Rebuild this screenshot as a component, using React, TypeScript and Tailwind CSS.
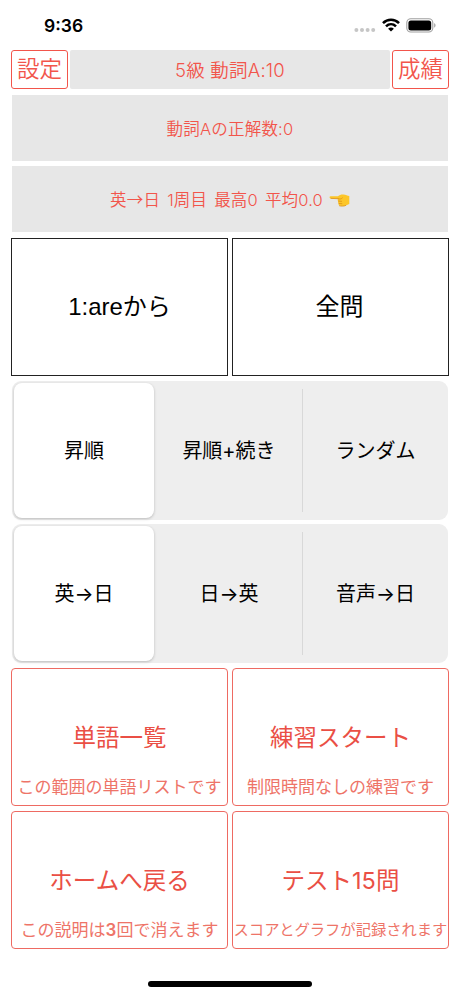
import { useState } from "react";
import type { ReactNode } from "react";

type SegmentProps = {
  items: string[];
  value: number;
  onChange: (index: number) => void;
};

const orders = ["昇順", "昇順+続き", "ランダム"];
const directions = ["英→日", "日→英", "音声→日"];

function StatusBar() {
  return (
    <div className="flex h-[50px] items-start justify-between pl-11 pr-[24px]">
      <span className="mt-[14px] font-['Inter'] text-[17.5px] font-semibold leading-6 text-black">
        9:36
      </span>
      <div className="mt-[17px] flex items-center">
        <svg width="22" height="16" viewBox="0 0 22 16" fill="#c6c6c6">
          <circle cx="2.4" cy="13" r="2" />
          <circle cx="8" cy="13" r="2" />
          <circle cx="13.6" cy="13" r="2" />
          <circle cx="19.2" cy="13" r="2" />
        </svg>
        <svg className="ml-[6px]" width="18" height="14" viewBox="0 0 18 14" fill="none" stroke="#000" strokeWidth="2.6">
          <path d="M1 5.1C5.5.7 12.5.7 17 5.1" />
          <path d="M4 8.4c2.9-2.8 7.1-2.8 10 0" />
          <path d="M6.1 10.7c1.7-1.5 4.1-1.5 5.8 0L9 13.6z" fill="#000" stroke="none" />
        </svg>
        <svg className="ml-[6px]" width="30" height="15" viewBox="0 0 30 15">
          <rect x="0.8" y="0.8" width="26" height="13.2" rx="4" fill="#fff" stroke="#a0a0a0" strokeWidth="1.1" />
          <rect x="2.4" y="2.4" width="22.8" height="10" rx="2.5" fill="#000" />
          <path d="M28.2 5.1c1.8.8 1.8 3.8 0 4.6z" fill="#a0a0a0" />
        </svg>
      </div>
    </div>
  );
}

function PointingHand() {
  return (
    <svg width="21" height="16" viewBox="0 0 21 16" className="ml-[6px]">
      <path
        d="M1.6 4.3 9 4.2c1.5-1.2 3.3-1.8 5.3-1.6 2.8.1 4.1 1.2 6 1.5v8c-1.8.3-2.7 1.8-4.8 1.9-2.6.2-4.7.1-5.5-.7-.7-.7-.4-1.4-.1-1.8-1-.5-1.2-1.6-.5-2.4-.9-.5-1-1.6-.3-2.4L1.7 6.4C.2 6.3.2 4.4 1.6 4.3z"
        fill="#fcc629"
      />
      <path
        d="M2 6.4l7 .3M9.4 9.1l3.2.2M9.9 11.5l3 .2M9.1 6.7c1.6.7 3.2.4 4.3-.8M10.5 13.8c2 .6 4.7.4 6.2-.3"
        fill="none"
        stroke="#dc9018"
        strokeWidth="0.8"
        strokeLinecap="round"
      />
    </svg>
  );
}

function Segment({ items, value, onChange }: SegmentProps) {
  return (
    <div className="mx-[12px] flex h-[139px] rounded-[9px] bg-[#eeeeee] py-[2px] pl-[2px]">
      {items.map((item, i) => (
        <button
          key={item}
          onClick={() => onChange(i)}
          className={
            i === value
              ? "mr-[2px] w-[140px] rounded-[8px] bg-white pt-px text-[20px] text-black shadow-[0_1px_3px_rgba(0,0,0,0.22)]"
              : "flex flex-1 items-center text-[20px] text-black"
          }
        >
          {i !== value && i - 1 !== value && <span className="h-[123px] w-px bg-[#d8d8d8]" />}
          <span className="flex-1 pt-px text-center font-['Inter','Noto_Sans_CJK_JP',sans-serif]">{item}</span>
        </button>
      ))}
    </div>
  );
}

function ActionButton({ title, note, noteClass }: { title: string; note: ReactNode; noteClass: string }) {
  return (
    <button className="flex h-[138px] flex-1 flex-col items-center rounded-[4px] border border-[#ee6a62] pt-[51px] text-[#ea4f45]">
      <span className="text-[23.5px] leading-9">{title}</span>
      <span className={`mt-[19px] whitespace-nowrap leading-6 text-[#ee7468] ${noteClass}`}>{note}</span>
    </button>
  );
}

function App() {
  const [order, setOrder] = useState(0);
  const [direction, setDirection] = useState(0);

  return (
    <div className="flex h-[996px] w-[460px] flex-col overflow-hidden bg-white font-['Inter','Noto_Sans_CJK_JP',sans-serif]">
      <StatusBar />

      <div className="flex h-[39px] justify-between px-[11px] font-[350] text-[#f2554b]">
        <button className="w-[57px] rounded-[3px] border border-[#f2554b] text-[22.5px] leading-none">設定</button>
        <div className="flex w-[320px] items-center justify-center rounded-[2px] bg-[#e7e7e7] pt-[2px] text-[18.5px] tracking-[0.2px]">
          5級 動詞A:10
        </div>
        <button className="w-[57px] rounded-[3px] border border-[#f2554b] text-[22.5px] leading-none">成績</button>
      </div>

      <div className="mx-[12px] mt-[6px] flex h-[66px] items-center justify-center bg-[#e7e7e7] pt-[2px] text-[16.5px] font-[350] tracking-[0.2px] text-[#f2554b]">
        動詞Aの正解数:0
      </div>
      <div className="mx-[12px] mt-[5px] flex h-[66px] items-center justify-center bg-[#e7e7e7] pt-[2px] text-[16.5px] font-[350] text-[#f2554b]">
        <span className="tracking-[0.15px] [word-spacing:2.3px]">
          英<span className="font-['Noto_Sans_CJK_JP',sans-serif]">→</span>日 1周目 最高0 平均0.0
        </span>
        <PointingHand />
      </div>

      <div className="mx-[11px] mt-[6px] grid h-[138px] grid-cols-2 gap-[4px] font-['Liberation_Sans','Noto_Sans_CJK_JP',sans-serif] text-[24px] text-black">
        <button className="border border-[#222]">1:areから</button>
        <button className="border border-[#222] pr-[2px]">全問</button>
      </div>

      <div className="mt-[5px] flex flex-col gap-[4px]">
        <Segment items={orders} value={order} onChange={setOrder} />
        <Segment items={directions} value={direction} onChange={setDirection} />
      </div>

      <div className="mx-[11px] mt-[5px] flex gap-[4px]">
        <ActionButton title="単語一覧" note="この範囲の単語リストです" noteClass="text-[17px]" />
        <ActionButton title="練習スタート" note="制限時間なしの練習です" noteClass="text-[17px]" />
      </div>
      <div className="mx-[11px] mt-[5px] flex gap-[4px]">
        <ActionButton
          title="ホームへ戻る"
          note={<>この説明は<span className="font-semibold">3</span>回で消えます</>}
          noteClass="text-[17px]"
        />
        <ActionButton title="テスト15問" note="スコアとグラフが記録されます" noteClass="text-[15.3px]" />
      </div>

      <div className="mx-auto mt-[32px] h-[6px] w-[164px] rounded-full bg-black" />
    </div>
  );
}

export default App;
